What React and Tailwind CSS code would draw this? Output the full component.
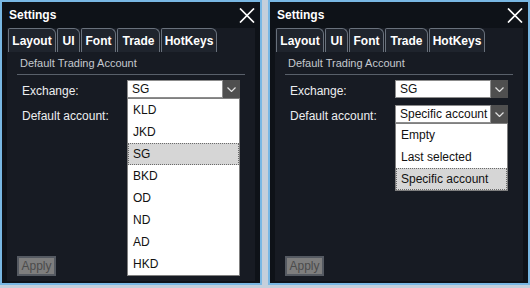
import React from "react";

const tabs = [
  { label: "Layout", w: "w-[48px]" },
  { label: "UI", w: "w-[23px]" },
  { label: "Font", w: "w-[35px]" },
  { label: "Trade", w: "w-[43px]" },
  { label: "HotKeys", w: "w-[56px]" },
];

function Chevron() {
  return (
    <svg width="9" height="5" viewBox="0 0 9 5">
      <path d="M0.5 0.5 L4.5 4.5 L8.5 0.5" stroke="#e2e2e2" fill="none" strokeWidth="1.2" />
    </svg>
  );
}

function CloseX() {
  return (
    <svg width="16" height="15" viewBox="0 0 16 15">
      <path d="M1 0.5 L15 14.5 M15 0.5 L1 14.5" stroke="#ffffff" strokeWidth="1.7" fill="none" />
    </svg>
  );
}

function Select({ value, list, selected }) {
  return (
    <div className="relative flex h-[18px] w-[113px]">
      <div className="flex w-[96px] items-center border border-[#8c8c8c] bg-white pl-[4px] text-[12px] leading-none text-[#111] whitespace-nowrap overflow-hidden">
        {value}
      </div>
      <div className="flex w-[17px] items-center justify-center bg-[#4f4f4f]">
        <Chevron />
      </div>
      {list && (
        <div className="absolute left-0 top-full z-10 w-[113px] border border-[#7f7f7f] bg-white">
          {list.map((item) => (
            <div
              key={item}
              className={
                item === selected
                  ? "flex h-[22px] items-center border border-dotted border-[#6a6a6a] bg-[#d6d6d6] px-[4px] text-[12px] text-[#111]"
                  : "flex h-[22px] items-center px-[5px] text-[12px] text-[#111]"
              }
            >
              {item}
            </div>
          ))}
        </div>
      )}
    </div>
  );
}

function Panel({ exchangeList, accountList, accountValue }) {
  return (
    <div className="flex h-[285px] w-[262px] flex-col border-2 border-[#78b7e3] bg-[#0e1218] px-[5px] pb-[2px] font-['Liberation_Sans',Arial,sans-serif]">
      <div className="flex h-[26px] items-center justify-between">
        <span className="pl-[2px] text-[12px] font-bold text-white">Settings</span>
        <CloseX />
      </div>
      <div className="flex flex-1 flex-col bg-[#171b23]">
        <div className="flex h-[24px] gap-[1px] pl-[1px]">
          {tabs.map((t) => (
            <div
              key={t.label}
              className={`${t.w} flex h-full items-center justify-center rounded-tl-[2px] rounded-tr-[6px] border border-b-0 border-[#69717c] bg-[#1f242d] text-[12px] font-bold text-white`}
            >
              {t.label}
            </div>
          ))}
        </div>
        <div className="ml-[10px] w-[228px] border-b border-[#59606a] pb-[4px] pl-[3px] pt-[5px] text-[11px] leading-[13px] text-[#c5c9cf]">
          Default Trading Account
        </div>
        <div className="mt-[5px] flex flex-col gap-[7px]">
          <div className="flex items-start">
            <div className="w-[120px] pl-[15px] pt-[4px] text-[12px] leading-[14px] text-[#eceef0]">Exchange:</div>
            <Select value="SG" list={exchangeList} selected="SG" />
          </div>
          <div className="flex items-start">
            <div className="w-[120px] pl-[15px] pt-[4px] text-[12px] leading-[14px] text-[#eceef0]">Default account:</div>
            <Select value={accountValue} list={accountList} selected="Specific account" />
          </div>
        </div>
        <div className="mb-[5px] ml-[10px] mt-auto flex h-[20px] w-[39px] items-center justify-center border-2 border-[#555a62] bg-[#7e7e7e] text-[12px] text-[#4b4b4b]">
          Apply
        </div>
      </div>
    </div>
  );
}

export default function App() {
  return (
    <div className="flex h-[288px] w-[530px] items-start gap-[6px] bg-[#c4cfdb]">
      <Panel exchangeList={["KLD", "JKD", "SG", "BKD", "OD", "ND", "AD", "HKD"]} accountValue="" />
      <Panel accountList={["Empty", "Last selected", "Specific account"]} accountValue="Specific account" />
    </div>
  );
}
